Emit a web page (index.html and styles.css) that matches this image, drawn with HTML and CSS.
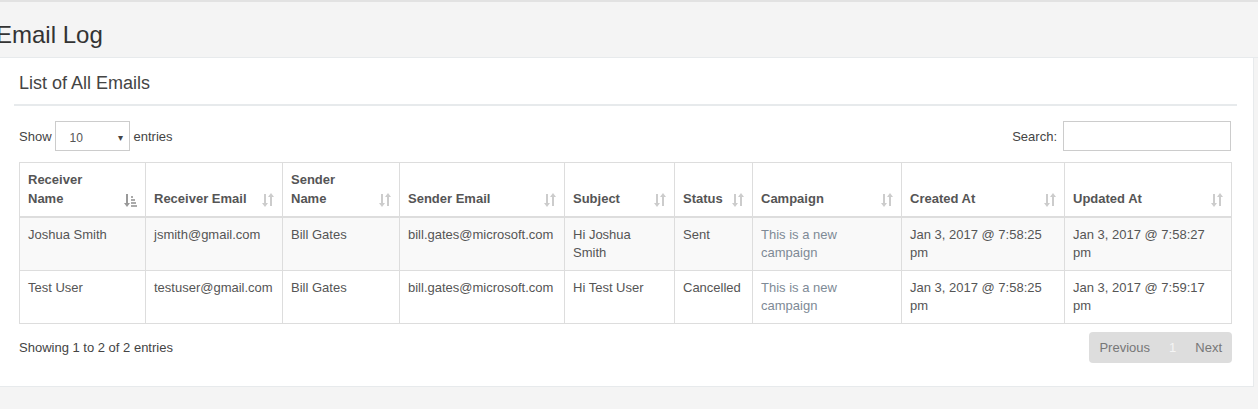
FILE: index.html
```html
<!DOCTYPE html>
<html lang="en">
<head>
    <meta charset="UTF-8">
    <title>Email Log</title>
    <link rel="stylesheet" href="styles.css">
</head>
<body>

<div class="page-heading">
    <h2>Email Log</h2>
</div>

<div class="ibox">
    <div class="ibox-title">
        <h5>List of All Emails</h5>
    </div>

    <div class="ibox-content">
        <div class="dt-top">
            <label class="dt-length">Show
                <span class="fake-select">10 <span class="caret">&#9662;</span></span>
                entries</label>
            <label class="dt-filter">Search: <span class="fake-input"></span></label>
        </div>

        <table class="grid">
            <colgroup>
                <col style="width:126px">
                <col style="width:137px">
                <col style="width:117px">
                <col style="width:165px">
                <col style="width:110px">
                <col style="width:78px">
                <col style="width:149px">
                <col style="width:163px">
                <col style="width:167px">
            </colgroup>
            <thead>
                <tr>
                    <th class="sorted">Receiver<br>Name</th>
                    <th>Receiver Email</th>
                    <th>Sender<br>Name</th>
                    <th>Sender Email</th>
                    <th>Subject</th>
                    <th>Status</th>
                    <th>Campaign</th>
                    <th>Created At</th>
                    <th>Updated At</th>
                </tr>
            </thead>
            <tbody>
                <tr class="odd">
                    <td>Joshua Smith</td>
                    <td>jsmith@gmail.com</td>
                    <td>Bill Gates</td>
                    <td>bill.gates@microsoft.com</td>
                    <td>Hi Joshua<br>Smith</td>
                    <td>Sent</td>
                    <td class="camp">This is a new<br>campaign</td>
                    <td>Jan 3, 2017 @ 7:58:25<br>pm</td>
                    <td>Jan 3, 2017 @ 7:58:27<br>pm</td>
                </tr>
                <tr>
                    <td>Test User</td>
                    <td>testuser@gmail.com</td>
                    <td>Bill Gates</td>
                    <td>bill.gates@microsoft.com</td>
                    <td>Hi Test User</td>
                    <td>Cancelled</td>
                    <td class="camp">This is a new<br>campaign</td>
                    <td>Jan 3, 2017 @ 7:58:25<br>pm</td>
                    <td>Jan 3, 2017 @ 7:59:17<br>pm</td>
                </tr>
            </tbody>
        </table>

        <div class="dt-bottom">
            <div class="dt-info">Showing 1 to 2 of 2 entries</div>
            <div class="pager">
                <span>Previous</span>
                <span class="current">1</span>
                <span>Next</span>
            </div>
        </div>
    </div>
</div>

<script>
    // sort icons into the header cells
    var both = '<svg width="12" height="14" viewBox="0 0 12 14"><path d="M2 1v9H0l3 4 3-4H4V1z M8 13V4H6l3-4 3 4h-2v9z" fill="#ccc"/></svg>';
    var asc = '<svg width="13" height="14" viewBox="0 0 13 14"><path d="M2 1v9H0l3 4 3-4H4V1z" fill="#999"/><rect x="7" y="3" width="2" height="2" fill="#aaa"/><rect x="7" y="6" width="4" height="2" fill="#aaa"/><rect x="7" y="9" width="5" height="2" fill="#aaa"/><rect x="7" y="12" width="6" height="2" fill="#aaa"/></svg>';
    document.querySelectorAll('.grid th').forEach(function (th) {
        var ico = document.createElement('span');
        ico.className = 'sort-ico';
        ico.innerHTML = th.classList.contains('sorted') ? asc : both;
        th.appendChild(ico);
    });
</script>
</body>
</html>
```

FILE: styles.css
```css
body {
    margin: 0;
    font-family: "Liberation Sans", Arial, sans-serif;
    font-size: 13px;
    color: #676a6c;
    background-color: #f4f4f4;
    border-top: 2px solid #e2e2e2;
}

.page-heading {
    height: 55px;
    border-bottom: 1px solid #e7eaec;
}
.page-heading h2 {
    margin: 0;
    padding-top: 20px;
    font-size: 24px;
    font-weight: normal;
    line-height: 26px;
    color: #333;
    text-indent: -4px;
}

.ibox {
    background-color: #fff;
    margin-right: 4px;
    border-right: 1px solid #e7eaec;
    border-bottom: 1px solid #e7eaec;
    padding: 0 16px 0 14px;
}
.ibox-title {
    border-bottom: 2px solid #e7eaec;
    padding: 14px 5px 0 5px;
    height: 32px;
}
.ibox-title h5 {
    margin: 0;
    font-size: 18px;
    font-weight: normal;
    line-height: 22px;
    color: #444;
}

.ibox-content {
    padding: 15px 5px 23px 5px;
}

.dt-top {
    display: flex;
    justify-content: space-between;
    align-items: center;
    height: 30px;
    margin-bottom: 11px;
}
.dt-top label {
    display: flex;
    align-items: center;
    color: #444;
}
.fake-select {
    display: inline-flex;
    justify-content: space-between;
    align-items: center;
    box-sizing: border-box;
    width: 75px;
    height: 30px;
    margin: 0 4px 0 3px;
    padding: 3px 6px 0 14px;
    border: 1px solid #ccc;
    font-size: 12px;
    color: #555;
}
.caret {
    font-size: 10px;
    color: #444;
}
.fake-input {
    display: inline-block;
    box-sizing: border-box;
    width: 168px;
    height: 30px;
    margin: 0 1px 0 6px;
    border: 1px solid #ccc;
}

.grid {
    border-collapse: collapse;
    table-layout: fixed;
    width: 1212px;
}
.grid th, .grid td {
    border: 1px solid #ddd;
    padding: 8px;
    line-height: 18px;
    vertical-align: top;
    text-align: left;
}
.grid th {
    position: relative;
    vertical-align: bottom;
    padding-right: 24px;
    line-height: 18.5px;
    height: 37px;
    border-bottom: 2px solid #ddd;
    font-weight: bold;
    color: #555;
}
.grid td {
    height: 36px;
    color: #555;
}
.grid tr.odd td {
    background-color: #f9f9f9;
}
.grid td.camp {
    color: #7e8a96;
}
.sort-ico {
    position: absolute;
    right: 8px;
    bottom: 9px;
    line-height: 0;
}

.dt-bottom {
    display: flex;
    justify-content: space-between;
    align-items: center;
    margin-top: 8px;
}
.dt-info {
    color: #444;
}
.pager {
    display: flex;
    align-items: center;
    height: 31px;
    padding: 0 10px;
    gap: 19px;
    background-color: #ddd;
    border-radius: 4px;
    font-size: 13px;
    color: #777;
}
.pager .current {
    color: #f5f5f5;
}
```
